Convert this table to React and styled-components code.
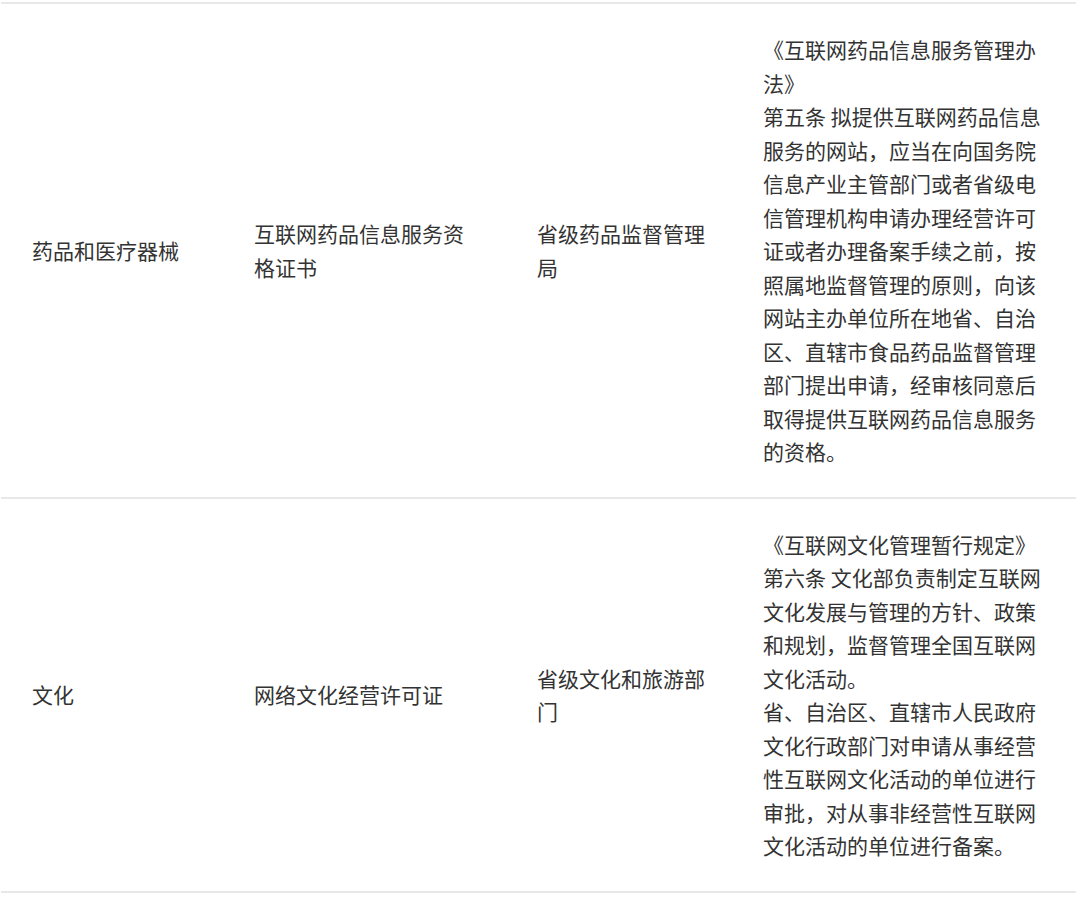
import React from 'react'
import styled, { createGlobalStyle } from 'styled-components'

const rows = [
  {
    category: '药品和医疗器械',
    license: '互联网药品信息服务资格证书',
    authority: '省级药品监督管理局',
    basis: [
      '《互联网药品信息服务管理办法》',
      '第五条 拟提供互联网药品信息服务的网站，应当在向国务院信息产业主管部门或者省级电信管理机构申请办理经营许可证或者办理备案手续之前，按照属地监督管理的原则，向该网站主办单位所在地省、自治区、直辖市食品药品监督管理部门提出申请，经审核同意后取得提供互联网药品信息服务的资格。',
    ],
  },
  {
    category: '文化',
    license: '网络文化经营许可证',
    authority: '省级文化和旅游部门',
    basis: [
      '《互联网文化管理暂行规定》',
      '第六条 文化部负责制定互联网文化发展与管理的方针、政策和规划，监督管理全国互联网文化活动。',
      '省、自治区、直辖市人民政府文化行政部门对申请从事经营性互联网文化活动的单位进行审批，对从事非经营性互联网文化活动的单位进行备案。',
    ],
  },
]

function App() {
  return (
    <>
      <GlobalStyle />
      <Page>
        <Table>
          {rows.map((row) => (
            <Row key={row.category}>
              <Cell>
                <Text $max={190}>{row.category}</Text>
              </Cell>
              <Cell>
                <Text $max={220}>{row.license}</Text>
              </Cell>
              <Cell>
                <Text $max={178}>{row.authority}</Text>
              </Cell>
              <Cell>
                <Text $max={286}>
                  {row.basis.map((line) => (
                    <Para key={line}>{line}</Para>
                  ))}
                </Text>
              </Cell>
            </Row>
          ))}
        </Table>
      </Page>
    </>
  )
}

export default App

const GlobalStyle = createGlobalStyle`
  html, body {
    margin: 0;
    padding: 0;
    background: #fff;
  }
  body {
    font-family: "Noto Sans CJK SC", "Noto Sans", sans-serif;
    color: #333;
  }
`

const Page = styled.div`
  width: 1080px;
  padding: 2px 0 0 1px;
  box-sizing: border-box;
`

const Table = styled.div`
  width: 1075px;
  border-top: 2px solid #e8e8e8;
`

const Row = styled.div`
  display: grid;
  grid-template-columns: 222px 283px 226px 1fr;
  border-bottom: 2px solid #e8e8e8;
  padding-left: 31px;
`

const Cell = styled.div`
  display: flex;
  align-items: center;
  padding: 29px 0 28px;
`

const Text = styled.div`
  max-width: ${(p) => p.$max}px;
  font-size: 21px;
  line-height: 33.5px;
  color: #333;
  word-break: break-all;
`

const Para = styled.div`
  margin: 0;
`
